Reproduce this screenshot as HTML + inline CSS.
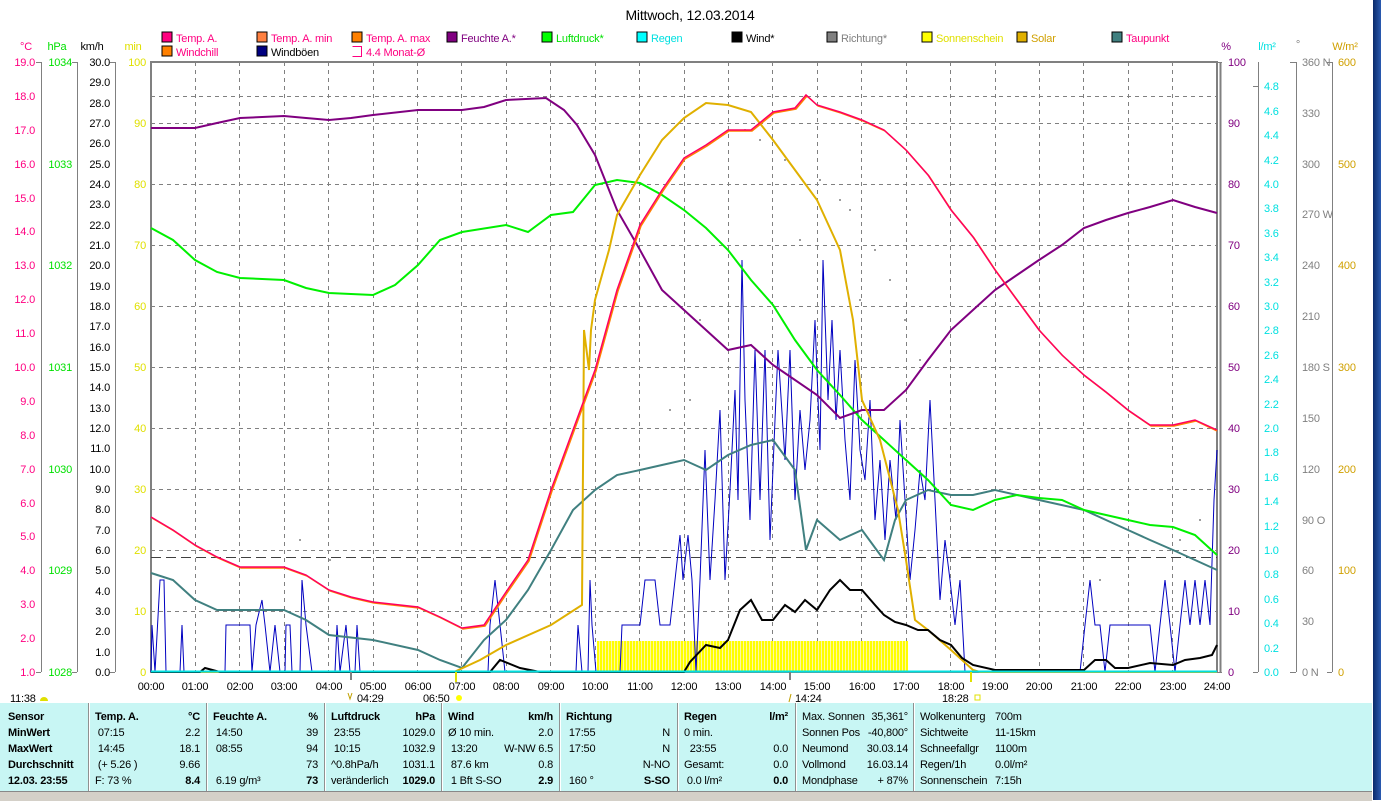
<!DOCTYPE html>
<html><head><meta charset="utf-8"><style>
*{margin:0;padding:0}
body{width:1381px;height:800px;background:#fff;position:relative;overflow:hidden;font-family:"Liberation Sans",sans-serif;font-size:11px}
.t{position:absolute;white-space:nowrap;line-height:16px;font-size:11px;letter-spacing:-0.2px;color:#000}
.r{text-align:right}
.b{font-weight:bold}
#tbl{position:absolute;left:0;top:703px;width:1372px;height:88px;background:#c8f6f4}
.sep{position:absolute;top:0;width:1px;height:88px;background:#909090;border-right:1px solid #fff}
#foot{position:absolute;left:0;top:791px;width:1372px;height:9px;background:#d4d0c8;border-top:1px solid #888}
#strip{position:absolute;left:1373px;top:0;width:8px;height:800px;background:linear-gradient(90deg,#0a2a6a,#2a5ab0)}
svg text{letter-spacing:-0.2px}
</style></head><body>
<svg width="1381" height="800" style="position:absolute;left:0;top:0" font-family="Liberation Sans, sans-serif" font-size="11">
<defs>
<pattern id="sun" width="3" height="10" patternUnits="userSpaceOnUse"><rect width="2" height="10" fill="#ffff00"/><rect x="2" width="1" height="10" fill="#fff8a0"/></pattern>
</defs>
<text x="690" y="20" font-size="14" text-anchor="middle">Mittwoch, 12.03.2014</text>
<g>
<rect x="162" y="32" width="10" height="10" fill="#ff0080" stroke="#000"/><text x="176" y="42" fill="#ff0080">Temp. A.</text>
<rect x="257" y="32" width="10" height="10" fill="#ff8040" stroke="#000"/><text x="271" y="42" fill="#ff0080">Temp. A. min</text>
<rect x="352" y="32" width="10" height="10" fill="#ff8000" stroke="#000"/><text x="366" y="42" fill="#ff0080">Temp. A. max</text>
<rect x="447" y="32" width="10" height="10" fill="#800080" stroke="#000"/><text x="461" y="42" fill="#800080">Feuchte A.*</text>
<rect x="542" y="32" width="10" height="10" fill="#00ff00" stroke="#000"/><text x="556" y="42" fill="#00e000">Luftdruck*</text>
<rect x="637" y="32" width="10" height="10" fill="#00ffff" stroke="#000"/><text x="651" y="42" fill="#00e0e0">Regen</text>
<rect x="732" y="32" width="10" height="10" fill="#000" stroke="#000"/><text x="746" y="42">Wind*</text>
<rect x="827" y="32" width="10" height="10" fill="#808080" stroke="#000"/><text x="841" y="42" fill="#808080">Richtung*</text>
<rect x="922" y="32" width="10" height="10" fill="#ffff00" stroke="#000"/><text x="936" y="42" fill="#e0e000">Sonnenschein</text>
<rect x="1017" y="32" width="10" height="10" fill="#e0b000" stroke="#000"/><text x="1031" y="42" fill="#d0a000">Solar</text>
<rect x="1112" y="32" width="10" height="10" fill="#408080" stroke="#000"/><text x="1126" y="42" fill="#ff0080">Taupunkt</text>
<rect x="162" y="46" width="10" height="10" fill="#ff8000" stroke="#000"/><text x="176" y="56" fill="#ff0080">Windchill</text>
<rect x="257" y="46" width="10" height="10" fill="#000080" stroke="#000"/><text x="271" y="56">Windböen</text>
<path d="M352.5 46.5h9v10h-9" fill="none" stroke="#ff0080"/><text x="366" y="56" fill="#ff0080">4.4 Monat-Ø</text>
</g>
<text x="26" y="50" fill="#ff0080" text-anchor="middle">°C</text>
<text x="57" y="50" fill="#00e000" text-anchor="middle">hPa</text>
<text x="92" y="50" text-anchor="middle">km/h</text>
<text x="133" y="50" fill="#e0e000" text-anchor="middle">min</text>
<text x="1226" y="50" fill="#800080" text-anchor="middle">%</text>
<text x="1267" y="50" fill="#00e0e0" text-anchor="middle">l/m²</text>
<text x="1298" y="48" fill="#808080" text-anchor="middle">°</text>
<text x="1345" y="50" fill="#d0a000" text-anchor="middle">W/m²</text>
<g stroke="#808080" stroke-width="1">
<line x1="41.5" y1="62" x2="41.5" y2="672"/><line x1="77.5" y1="62" x2="77.5" y2="672"/><line x1="115.5" y1="62" x2="115.5" y2="672"/>
<line x1="1258.5" y1="62" x2="1258.5" y2="672"/><line x1="1296.5" y1="62" x2="1296.5" y2="672"/><line x1="1332.5" y1="62" x2="1332.5" y2="672"/>
</g>
<g fill="#ff0080" text-anchor="end">
<text x="35" y="66">19.0</text><text x="35" y="100">18.0</text><text x="35" y="134">17.0</text><text x="35" y="168">16.0</text><text x="35" y="202">15.0</text><text x="35" y="235">14.0</text><text x="35" y="269">13.0</text><text x="35" y="303">12.0</text><text x="35" y="337">11.0</text><text x="35" y="371">10.0</text><text x="35" y="405">9.0</text><text x="35" y="439">8.0</text><text x="35" y="473">7.0</text><text x="35" y="507">6.0</text><text x="35" y="540">5.0</text><text x="35" y="574">4.0</text><text x="35" y="608">3.0</text><text x="35" y="642">2.0</text><text x="35" y="676">1.0</text>
</g>
<g fill="#00e000" text-anchor="end">
<text x="72" y="66">1034</text><text x="72" y="168">1033</text><text x="72" y="269">1032</text><text x="72" y="371">1031</text><text x="72" y="473">1030</text><text x="72" y="574">1029</text><text x="72" y="676">1028</text>
</g>
<g text-anchor="end">
<text x="110" y="66">30.0</text><text x="110" y="86">29.0</text><text x="110" y="107">28.0</text><text x="110" y="127">27.0</text><text x="110" y="147">26.0</text><text x="110" y="168">25.0</text><text x="110" y="188">24.0</text><text x="110" y="208">23.0</text><text x="110" y="229">22.0</text><text x="110" y="249">21.0</text><text x="110" y="269">20.0</text><text x="110" y="290">19.0</text><text x="110" y="310">18.0</text><text x="110" y="330">17.0</text><text x="110" y="351">16.0</text><text x="110" y="371">15.0</text><text x="110" y="391">14.0</text><text x="110" y="412">13.0</text><text x="110" y="432">12.0</text><text x="110" y="452">11.0</text><text x="110" y="473">10.0</text><text x="110" y="493">9.0</text><text x="110" y="513">8.0</text><text x="110" y="534">7.0</text><text x="110" y="554">6.0</text><text x="110" y="574">5.0</text><text x="110" y="595">4.0</text><text x="110" y="615">3.0</text><text x="110" y="635">2.0</text><text x="110" y="656">1.0</text><text x="110" y="676">0.0</text>
</g>
<g fill="#e0e000" text-anchor="end">
<text x="146" y="66">100</text><text x="146" y="127">90</text><text x="146" y="188">80</text><text x="146" y="249">70</text><text x="146" y="310">60</text><text x="146" y="371">50</text><text x="146" y="432">40</text><text x="146" y="493">30</text><text x="146" y="554">20</text><text x="146" y="615">10</text><text x="146" y="676">0</text>
</g>
<g fill="#800080">
<text x="1228" y="66">100</text><text x="1228" y="127">90</text><text x="1228" y="188">80</text><text x="1228" y="249">70</text><text x="1228" y="310">60</text><text x="1228" y="371">50</text><text x="1228" y="432">40</text><text x="1228" y="493">30</text><text x="1228" y="554">20</text><text x="1228" y="615">10</text><text x="1228" y="676">0</text>
</g>
<g fill="#00e0e0">
<text x="1264" y="90">4.8</text><text x="1264" y="115">4.6</text><text x="1264" y="139">4.4</text><text x="1264" y="164">4.2</text><text x="1264" y="188">4.0</text><text x="1264" y="212">3.8</text><text x="1264" y="237">3.6</text><text x="1264" y="261">3.4</text><text x="1264" y="286">3.2</text><text x="1264" y="310">3.0</text><text x="1264" y="334">2.8</text><text x="1264" y="359">2.6</text><text x="1264" y="383">2.4</text><text x="1264" y="408">2.2</text><text x="1264" y="432">2.0</text><text x="1264" y="456">1.8</text><text x="1264" y="481">1.6</text><text x="1264" y="505">1.4</text><text x="1264" y="530">1.2</text><text x="1264" y="554">1.0</text><text x="1264" y="578">0.8</text><text x="1264" y="603">0.6</text><text x="1264" y="627">0.4</text><text x="1264" y="652">0.2</text><text x="1264" y="676">0.0</text>
</g>
<g fill="#808080">
<text x="1302" y="66">360 N</text><text x="1302" y="117">330</text><text x="1302" y="168">300</text><text x="1302" y="218">270 W</text><text x="1302" y="269">240</text><text x="1302" y="320">210</text><text x="1302" y="371">180 S</text><text x="1302" y="422">150</text><text x="1302" y="473">120</text><text x="1302" y="524">90 O</text><text x="1302" y="574">60</text><text x="1302" y="625">30</text><text x="1302" y="676">0 N</text>
</g>
<g fill="#d0a000">
<text x="1338" y="66">600</text><text x="1338" y="168">500</text><text x="1338" y="269">400</text><text x="1338" y="371">300</text><text x="1338" y="473">200</text><text x="1338" y="574">100</text><text x="1338" y="676">0</text>
</g>
<g stroke="#808080" stroke-dasharray="4,4" stroke-width="1">
<path d="M151 123.5H1217M151 184.5H1217M151 245.5H1217M151 306.5H1217M151 367.5H1217M151 428.5H1217M151 489.5H1217M151 550.5H1217M151 611.5H1217M151 96.5H1217"/>
<path d="M195.5 62V672M239.5 62V672M284.5 62V672M328.5 62V672M373.5 62V672M417.5 62V672M461.5 62V672M506.5 62V672M550.5 62V672M595.5 62V672M639.5 62V672M684.5 62V672M728.5 62V672M772.5 62V672M817.5 62V672M861.5 62V672M906.5 62V672M950.5 62V672M995.5 62V672M1039.5 62V672M1083.5 62V672M1128.5 62V672M1172.5 62V672"/>
</g>
<rect x="151" y="62" width="1066" height="610" fill="none" stroke="#808080" stroke-width="2"/>
<line x1="1220.5" y1="62" x2="1220.5" y2="672" stroke="#808080" stroke-width="2"/>
<path d="M36 62.5h5M72 62.5h5M110 62.5h5M1217 62.5h5M1253 86.5h5M1290 62.5h6M1327 62.5h5M36 672.5h5M72 672.5h5M110 672.5h5M1217 672.5h5M1253 672.5h5M1290 672.5h6M1327 672.5h5" stroke="#808080"/>
<rect x="597" y="641" width="311" height="31" fill="url(#sun)"/>
<line x1="151" y1="557.5" x2="1217" y2="557.5" stroke="#404040" stroke-dasharray="10,5"/>
<g fill="#808080"><circle cx="690" cy="400" r="1"/><circle cx="700" cy="320" r="1"/><circle cx="745" cy="130" r="1"/><circle cx="760" cy="140" r="1"/><circle cx="785" cy="160" r="1"/><circle cx="800" cy="240" r="1"/><circle cx="820" cy="180" r="1"/><circle cx="840" cy="200" r="1"/><circle cx="850" cy="210" r="1"/><circle cx="860" cy="300" r="1"/><circle cx="875" cy="250" r="1"/><circle cx="890" cy="280" r="1"/><circle cx="905" cy="320" r="1"/><circle cx="920" cy="360" r="1"/><circle cx="300" cy="540" r="1"/><circle cx="330" cy="560" r="1"/><circle cx="1100" cy="580" r="1"/><circle cx="1180" cy="540" r="1"/><circle cx="1200" cy="520" r="1"/><circle cx="670" cy="410" r="1"/></g>
<polyline fill="none" stroke="#0000c0" stroke-width="1" points="151,672 152,625 155,672 160,580 164,580 166,672 180,672 182,625 184,672 225,672 226,625 250,625 252,672 256,625 262,600 265,625 270,672 275,625 280,672 285,672 286,625 290,625 292,672 300,672 302,580 306,625 312,672 335,672 337,625 340,672 346,625 350,672 355,672 357,625 360,672 488,672 490,625 495,580 500,625 505,672 576,672 578,625 582,672 588,672 590,580 592,625 596,672 620,672 622,625 640,625 645,580 655,580 660,625 670,625 675,580 680,535 683,580 688,535 692,580 696,672 700,580 705,450 710,580 715,500 720,410 725,580 730,490 735,390 738,500 742,260 745,400 750,520 755,350 760,500 765,350 770,540 775,420 778,350 785,460 790,350 795,500 800,410 805,470 810,420 815,320 820,450 823,260 828,400 832,320 836,420 840,350 845,440 850,500 855,360 860,450 865,480 870,400 875,520 880,460 885,540 890,460 896,520 900,420 905,500 910,580 915,530 920,470 925,500 930,400 935,500 940,600 945,540 950,580 955,625 960,580 965,672 1080,672 1085,625 1090,580 1095,625 1100,625 1105,672 1110,625 1150,625 1155,672 1160,625 1165,580 1170,625 1175,672 1180,625 1185,580 1190,625 1195,580 1200,625 1205,580 1210,625 1214,500 1217,450"/>
<polyline fill="none" stroke="#408080" stroke-width="2" points="151,573 173,580 195,600 217,610 240,610 284,610 306,620 329,635 373,640 418,650 440,660 462,668 484,640 506,620 528,590 551,550 573,510 595,490 617,475 640,470 662,465 684,460 706,470 728,455 751,445 773,440 795,470 806,550 817,520 840,540 862,530 884,560 895,520 906,500 928,490 951,495 973,495 995,490 1039,500 1084,510 1106,520 1128,530 1150,540 1173,550 1195,560 1217,570"/>
<polyline fill="none" stroke="#00f000" stroke-width="2" points="151,228 173,240 195,260 217,272 240,278 284,280 306,288 329,293 373,295 395,285 418,265 440,240 462,232 506,225 528,232 551,215 573,212 595,185 617,180 640,183 662,195 684,210 706,228 728,250 751,280 773,305 795,340 817,370 840,395 862,420 884,440 906,460 928,480 951,505 973,510 995,500 1017,495 1039,498 1062,500 1084,510 1106,515 1128,520 1150,525 1173,527 1195,535 1217,555"/>
<polyline fill="none" stroke="#800080" stroke-width="2" points="151,128 195,128 217,123 240,118 284,116 306,118 329,120 351,118 373,115 418,110 462,110 484,107 506,100 546,98 564,110 577,125 595,155 617,210 640,250 662,290 684,310 706,330 728,350 751,345 773,365 795,380 817,395 840,418 862,410 884,410 906,390 928,360 951,330 973,310 995,290 1017,275 1039,260 1062,245 1084,228 1106,220 1128,213 1150,207 1173,200 1195,207 1217,213"/>
<polyline fill="none" stroke="#e0b000" stroke-width="2" points="151,672 454,672 480,660 506,645 551,625 582,605 584,330 589,370 591,330 595,300 609,250 617,215 640,175 662,140 684,118 706,103 728,105 751,112 773,140 795,170 817,200 840,250 853,320 862,400 880,440 898,510 906,560 915,620 928,630 951,650 973,670 980,672 1217,672"/>
<polyline fill="none" stroke="#ff8000" stroke-width="1.5" points="152,518 174,531 196,546 218,558 241,568 285,568 307,576 330,591 352,598 374,603 419,608 441,618 463,629 485,626 507,593 529,561 552,491 574,431 596,371 618,291 641,226 663,191 685,159 707,146 729,131 752,131 774,113 796,109 807,96 818,106 841,113 863,121 885,131 907,151 929,176 952,211 974,238 996,271 1018,301 1040,331 1063,356 1085,376 1107,393 1129,411 1151,426 1174,426 1196,421 1217,431"/>
<polyline fill="none" stroke="#ff0060" stroke-width="1.5" points="151,517 173,530 195,545 217,557 240,567 284,567 306,575 329,590 351,597 373,602 418,607 440,617 462,628 484,625 506,592 528,560 551,490 573,430 595,370 617,290 640,225 662,190 684,158 706,145 728,130 751,130 773,112 795,108 806,95 817,105 840,112 862,120 884,130 906,150 928,175 951,210 973,237 995,270 1017,300 1039,330 1062,355 1084,375 1106,392 1128,410 1150,425 1173,425 1195,420 1217,430"/>
<polyline fill="none" stroke="#000" stroke-width="2" points="151,672 200,672 205,668 220,672 490,672 500,660 520,668 540,672 684,672 690,662 706,645 720,648 728,640 740,610 751,600 762,620 773,620 785,605 795,612 805,600 817,610 830,590 840,580 850,590 862,590 875,605 884,615 895,622 906,625 918,630 928,630 940,640 951,645 962,658 973,665 995,670 1084,670 1095,660 1106,660 1115,668 1128,668 1150,663 1173,665 1185,660 1200,658 1212,655 1217,645"/>
<line x1="151" y1="671.5" x2="1217" y2="671.5" stroke="#00e0e0" stroke-width="2"/>
<g text-anchor="middle">
<text x="151" y="690">00:00</text><text x="195" y="690">01:00</text><text x="240" y="690">02:00</text><text x="284" y="690">03:00</text><text x="329" y="690">04:00</text><text x="373" y="690">05:00</text><text x="418" y="690">06:00</text><text x="462" y="690">07:00</text><text x="506" y="690">08:00</text><text x="551" y="690">09:00</text><text x="595" y="690">10:00</text><text x="640" y="690">11:00</text><text x="684" y="690">12:00</text><text x="728" y="690">13:00</text><text x="773" y="690">14:00</text><text x="817" y="690">15:00</text><text x="862" y="690">16:00</text><text x="906" y="690">17:00</text><text x="951" y="690">18:00</text><text x="995" y="690">19:00</text><text x="1039" y="690">20:00</text><text x="1084" y="690">21:00</text><text x="1128" y="690">22:00</text><text x="1173" y="690">23:00</text><text x="1217" y="690">24:00</text>
</g>
<path d="M351 672v8M456 672v8M790 672v8M971 672v8" stroke="#808080" stroke-width="2"/>
<line x1="456" y1="672" x2="456" y2="682" stroke="#e0e000" stroke-width="2"/>
<line x1="971" y1="672" x2="971" y2="682" stroke="#e0e000" stroke-width="2"/>
<text x="10" y="702">11:38</text><path d="M40 701a4 4 0 0 1 8 0z" fill="#e0e000"/>
<text x="357" y="702">04:29</text><path d="M348 693l2 6 2-6" stroke="#c0a000" fill="none"/>
<text x="423" y="702">06:50</text><circle cx="459" cy="698" r="3" fill="#ffff00"/>
<text x="795" y="702">14:24</text><path d="M791 694l-2 8" stroke="#c0a000"/>
<text x="942" y="702">18:28</text><rect x="975" y="695" width="5" height="5" fill="none" stroke="#e0e000"/>
</svg>
<div id="tbl">
<div class="sep" style="left:88px"></div><div class="sep" style="left:206px"></div><div class="sep" style="left:324px"></div><div class="sep" style="left:441px"></div><div class="sep" style="left:559px"></div><div class="sep" style="left:677px"></div><div class="sep" style="left:795px"></div><div class="sep" style="left:913px"></div>
</div>
<div class="t b" style="left:8px;top:709px">Sensor<br>MinWert<br>MaxWert<br>Durchschnitt<br>12.03. 23:55</div>
<div class="t" style="left:95px;top:709px"><b>Temp. A.</b><br>&nbsp;07:15<br>&nbsp;14:45<br>&nbsp;(+ 5.26 )<br>F: 73 %</div>
<div class="t r" style="left:150px;width:50px;top:709px"><b>°C</b><br>2.2<br>18.1<br>9.66<br><b>8.4</b></div>
<div class="t" style="left:213px;top:709px"><b>Feuchte A.</b><br>&nbsp;14:50<br>&nbsp;08:55<br>&nbsp;<br>&nbsp;6.19 g/m³</div>
<div class="t r" style="left:268px;width:50px;top:709px"><b>%</b><br>39<br>94<br>73<br><b>73</b></div>
<div class="t" style="left:331px;top:709px"><b>Luftdruck</b><br>&nbsp;23:55<br>&nbsp;10:15<br>^0.8hPa/h<br>veränderlich</div>
<div class="t r" style="left:385px;width:50px;top:709px"><b>hPa</b><br>1029.0<br>1032.9<br>1031.1<br><b>1029.0</b></div>
<div class="t" style="left:448px;top:709px"><b>Wind</b><br>Ø 10 min.<br>&nbsp;13:20<br>&nbsp;87.6 km<br>&nbsp;1 Bft S-SO</div>
<div class="t r" style="left:480px;width:73px;top:709px"><b>km/h</b><br>2.0<br>W-NW 6.5<br>0.8<br><b>2.9</b></div>
<div class="t" style="left:566px;top:709px"><b>Richtung</b><br>&nbsp;17:55<br>&nbsp;17:50<br>&nbsp;<br>&nbsp;160 °</div>
<div class="t r" style="left:620px;width:50px;top:709px"><b>&nbsp;</b><br>N<br>N<br>N-NO<br><b>S-SO</b></div>
<div class="t" style="left:684px;top:709px"><b>Regen</b><br>0 min.<br>&nbsp;&nbsp;23:55<br>Gesamt:<br>&nbsp;0.0 l/m²</div>
<div class="t r" style="left:738px;width:50px;top:709px"><b>l/m²</b><br>&nbsp;<br>0.0<br>0.0<br><b>0.0</b></div>
<div class="t" style="left:802px;top:709px">Max. Sonnen<br>Sonnen Pos<br>Neumond<br>Vollmond<br>Mondphase</div>
<div class="t r" style="left:860px;width:48px;top:709px">35,361°<br>-40,800°<br>30.03.14<br>16.03.14<br>+ 87%</div>
<div class="t" style="left:920px;top:709px">Wolkenunterg<br>Sichtweite<br>Schneefallgr<br>Regen/1h<br>Sonnenschein</div>
<div class="t" style="left:995px;top:709px">700m<br>11-15km<br>1100m<br>0.0l/m²<br>7:15h</div>
<div id="foot"></div>
<div id="strip"></div>
</body></html>
